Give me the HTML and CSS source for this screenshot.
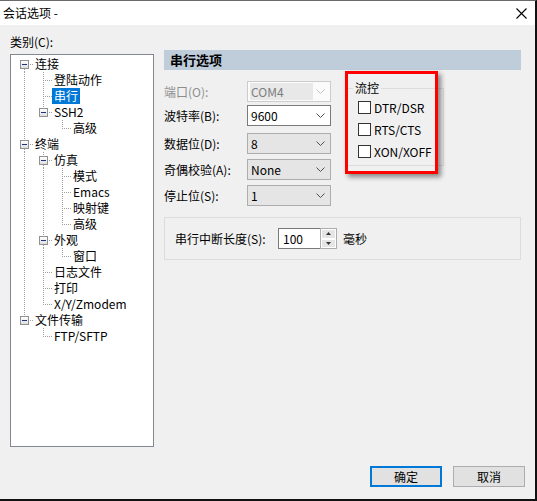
FILE: index.html
```html
<!DOCTYPE html>
<html lang="zh-CN">
<head>
<meta charset="utf-8">
<title>会话选项</title>
<link rel="stylesheet" href="styles.css">
</head>
<body>
<div class="window">
  <div class="titlebar">
    <span class="title">会话选项 -</span>
    <svg class="close" width="11" height="11" viewBox="0 0 11 11"><path d="M0.5 0.5 L10.5 10.5 M10.5 0.5 L0.5 10.5" stroke="#000" stroke-width="1.1" fill="none"/></svg>
  </div>
  <div class="main">
    <div class="cat">
      <div class="cat-label">类别(C):</div>
      <div class="tree">
        <div class="row"><span class="g bx bot"><i class="box"></i></span><span class="t">连接</span></div>
        <div class="row"><span class="g pipe"></span><span class="g tee"></span><span class="t">登陆动作</span></div>
        <div class="row"><span class="g pipe"></span><span class="g tee"></span><span class="t sel">串行</span></div>
        <div class="row"><span class="g pipe"></span><span class="g bx top"><i class="box"></i></span><span class="t">SSH2</span></div>
        <div class="row"><span class="g pipe"></span><span class="g"></span><span class="g elbow"></span><span class="t">高级</span></div>
        <div class="row"><span class="g bx mid"><i class="box"></i></span><span class="t">终端</span></div>
        <div class="row"><span class="g pipe"></span><span class="g bx mid"><i class="box"></i></span><span class="t">仿真</span></div>
        <div class="row"><span class="g pipe"></span><span class="g pipe"></span><span class="g tee"></span><span class="t">模式</span></div>
        <div class="row"><span class="g pipe"></span><span class="g pipe"></span><span class="g tee"></span><span class="t">Emacs</span></div>
        <div class="row"><span class="g pipe"></span><span class="g pipe"></span><span class="g tee"></span><span class="t">映射键</span></div>
        <div class="row"><span class="g pipe"></span><span class="g pipe"></span><span class="g elbow"></span><span class="t">高级</span></div>
        <div class="row"><span class="g pipe"></span><span class="g bx mid"><i class="box"></i></span><span class="t">外观</span></div>
        <div class="row"><span class="g pipe"></span><span class="g pipe"></span><span class="g elbow"></span><span class="t">窗口</span></div>
        <div class="row"><span class="g pipe"></span><span class="g tee"></span><span class="t">日志文件</span></div>
        <div class="row"><span class="g pipe"></span><span class="g tee"></span><span class="t">打印</span></div>
        <div class="row"><span class="g pipe"></span><span class="g elbow"></span><span class="t">X/Y/Zmodem</span></div>
        <div class="row"><span class="g bx top"><i class="box"></i></span><span class="t">文件传输</span></div>
        <div class="row"><span class="g"></span><span class="g elbow"></span><span class="t">FTP/SFTP</span></div>
      </div>
    </div>
    <div class="panel">
      <div class="head">串行选项</div>
      <div class="upper">
        <div class="fields">
          <div class="lbl disabled">端口(O):</div>
          <div class="combo dis"><span class="val">COM4</span><svg class="chev" width="9" height="5" viewBox="0 0 9 5"><path d="M0.5 0.5 L4.5 4.5 L8.5 0.5" stroke="#c4c4c4" fill="none"/></svg></div>
          <div class="lbl">波特率(B):</div>
          <div class="combo edit"><span class="val">9600</span><svg class="chev" width="9" height="5" viewBox="0 0 9 5"><path d="M0.5 0.5 L4.5 4.5 L8.5 0.5" stroke="#505050" fill="none"/></svg></div>
          <div class="lbl">数据位(D):</div>
          <div class="combo"><span class="val">8</span><svg class="chev" width="9" height="5" viewBox="0 0 9 5"><path d="M0.5 0.5 L4.5 4.5 L8.5 0.5" stroke="#505050" fill="none"/></svg></div>
          <div class="lbl">奇偶校验(A):</div>
          <div class="combo"><span class="val">None</span><svg class="chev" width="9" height="5" viewBox="0 0 9 5"><path d="M0.5 0.5 L4.5 4.5 L8.5 0.5" stroke="#505050" fill="none"/></svg></div>
          <div class="lbl">停止位(S):</div>
          <div class="combo"><span class="val">1</span><svg class="chev" width="9" height="5" viewBox="0 0 9 5"><path d="M0.5 0.5 L4.5 4.5 L8.5 0.5" stroke="#505050" fill="none"/></svg></div>
        </div>
        <div class="flow">
          <fieldset class="flowgrp">
            <legend>流控</legend>
            <div class="checks">
              <div class="chk"><span class="cb"></span><span>DTR/DSR</span></div>
              <div class="chk"><span class="cb"></span><span>RTS/CTS</span></div>
              <div class="chk"><span class="cb"></span><span>XON/XOFF</span></div>
            </div>
          </fieldset>
          <div class="mark"></div>
        </div>
      </div>
      <div class="brk">
        <span class="brk-lbl">串行中断长度(S):</span>
        <div class="spin">
          <span class="spin-val">100</span>
          <span class="spin-btns">
            <span class="sb"><svg width="5" height="3" viewBox="0 0 5 3"><path d="M2.5 0 L5 3 L0 3 Z" fill="#333"/></svg></span>
            <span class="sb"><svg width="5" height="3" viewBox="0 0 5 3"><path d="M0 0 L5 0 L2.5 3 Z" fill="#333"/></svg></span>
          </span>
        </div>
        <span class="unit">毫秒</span>
      </div>
    </div>
  </div>
  <div class="footer">
    <button class="btn primary">确定</button>
    <button class="btn">取消</button>
  </div>
</div>
</body>
</html>
```
FILE: styles.css
```css
html, body {
  margin: 0;
  padding: 0;
  background: #f0f0f0;
}
body {
  font-family: "Noto Sans CJK SC", "Noto Sans", sans-serif;
  font-size: 12px;
  line-height: 16px;
  color: #000;
}
.window {
  width: 537px;
  height: 501px;
  box-sizing: border-box;
  border-top: 1px solid #6a6a6a;
  border-right: 2px solid #111;
  border-bottom: 2px solid #111;
  background: #f0f0f0;
  display: flex;
  flex-direction: column;
}
.titlebar {
  height: 24px;
  flex-shrink: 0;
  background: #fff;
  display: flex;
  align-items: center;
  padding-left: 3px;
}
.title {
  line-height: 16px;
}
.close {
  margin-left: auto;
  margin-right: 8px;
  display: block;
}
.main {
  flex: 1;
  display: flex;
}
.cat {
  padding-left: 10px;
  padding-top: 9px;
}
.cat-label {
  line-height: 16px;
  margin-bottom: 4px;
}
.tree {
  width: 144px;
  height: 393px;
  box-sizing: border-box;
  border: 1px solid #828790;
  background: #fff;
  padding: 1px 0 0 4px;
}
.row {
  display: flex;
  height: 16px;
}
.g {
  width: 19px;
  height: 16px;
  flex-shrink: 0;
  display: flex;
  align-items: flex-start;
}
.pipe {
  background: repeating-linear-gradient(to bottom, #a0a0a0 0 1px, transparent 1px 2px) 9px 0 / 1px 16px no-repeat;
}
.tee {
  background:
    repeating-linear-gradient(to bottom, #a0a0a0 0 1px, transparent 1px 2px) 9px 0 / 1px 16px no-repeat,
    repeating-linear-gradient(to right, #a0a0a0 0 1px, transparent 1px 2px) 11px 8px / 8px 1px no-repeat;
}
.elbow {
  background:
    repeating-linear-gradient(to bottom, #a0a0a0 0 1px, transparent 1px 2px) 9px 0 / 1px 9px no-repeat,
    repeating-linear-gradient(to right, #a0a0a0 0 1px, transparent 1px 2px) 11px 8px / 8px 1px no-repeat;
}
.bx.bot {
  background:
    repeating-linear-gradient(to bottom, #a0a0a0 0 1px, transparent 1px 2px) 9px 13px / 1px 3px no-repeat,
    repeating-linear-gradient(to right, #a0a0a0 0 1px, transparent 1px 2px) 15px 8px / 4px 1px no-repeat;
}
.bx.top {
  background:
    repeating-linear-gradient(to bottom, #a0a0a0 0 1px, transparent 1px 2px) 9px 0 / 1px 4px no-repeat,
    repeating-linear-gradient(to right, #a0a0a0 0 1px, transparent 1px 2px) 15px 8px / 4px 1px no-repeat;
}
.bx.mid {
  background:
    repeating-linear-gradient(to bottom, #a0a0a0 0 1px, transparent 1px 2px) 9px 0 / 1px 4px no-repeat,
    repeating-linear-gradient(to bottom, #a0a0a0 0 1px, transparent 1px 2px) 9px 13px / 1px 3px no-repeat,
    repeating-linear-gradient(to right, #a0a0a0 0 1px, transparent 1px 2px) 15px 8px / 4px 1px no-repeat;
}
.box {
  width: 9px;
  height: 9px;
  box-sizing: border-box;
  margin: 4px 0 0 5px;
  border: 1px solid #919191;
  background:
    linear-gradient(#23307a, #23307a) 1px 3px / 5px 1px no-repeat,
    linear-gradient(#ffffff, #dedede);
}
.t {
  padding: 0 2px;
  margin-left: -1px;
  line-height: 16px;
  white-space: nowrap;
}
.t.sel {
  background: #0078d7;
  color: #fff;
}
.panel {
  margin-left: 10px;
  padding-top: 25px;
  width: 357px;
}
.head {
  height: 20px;
  line-height: 20px;
  background: #bfcddb;
  font-size: 13px;
  font-weight: bold;
  padding-left: 6px;
}
.upper {
  margin-top: 11px;
  display: flex;
  align-items: flex-start;
}
.fields {
  display: grid;
  grid-template-columns: 83px 84px;
  grid-template-rows: 24px 28px 26px 26px 21px;
  align-items: start;
}
.lbl {
  line-height: 21px;
  white-space: nowrap;
}
.lbl.disabled {
  color: #8d8d8d;
}
.combo {
  height: 21px;
  box-sizing: border-box;
  border: 1px solid #adadad;
  background: #e5e5e5;
  display: flex;
  align-items: center;
  justify-content: space-between;
  padding: 0 5px 0 3px;
}
.combo .val {
  line-height: 17px;
}
.combo.edit {
  background: #fff;
  border-color: #7a7a7a;
}
.combo.dis {
  background: #fbfbfb;
  border-color: #cccccc;
  padding-left: 2px;
}
.combo.dis .val {
  background: #e8e8e8;
  color: #7d7d7d;
  width: 62px;
  padding-left: 1px;
}
.chev {
  display: block;
}
.flow {
  position: relative;
  margin-left: 16px;
  margin-top: -1px;
}
.flowgrp {
  margin: 0;
  padding: 0;
  width: 97px;
  box-sizing: border-box;
  border: 1px solid #dcdcdc;
  min-width: 0;
}
.flowgrp legend {
  margin-left: 5px;
  padding: 0 2px;
  line-height: 16px;
}
.checks {
  display: flex;
  flex-direction: column;
  gap: 9px;
  padding: 5px 0 7px 10px;
}
.chk {
  display: flex;
  align-items: center;
  height: 13px;
  gap: 3px;
  line-height: 16px;
}
.cb {
  width: 13px;
  height: 13px;
  box-sizing: border-box;
  border: 1px solid #333;
  background: #fff;
  flex-shrink: 0;
}
.mark {
  position: absolute;
  left: -2px;
  top: -9px;
  width: 93px;
  height: 103px;
  box-sizing: border-box;
  border: 3px solid #ff0000;
  box-shadow: 3px 3px 5px rgba(0, 0, 0, 0.45);
}
.brk {
  margin-top: 11px;
  height: 43px;
  box-sizing: border-box;
  border: 1px solid #dcdcdc;
  display: flex;
  align-items: center;
  padding-left: 10px;
}
.brk-lbl {
  width: 103px;
  white-space: nowrap;
}
.spin {
  display: flex;
  height: 21px;
  width: 59px;
}
.spin-val {
  flex: 1;
  box-sizing: border-box;
  border: 1px solid #7a7a7a;
  border-right: 0;
  background: #fff;
  padding-left: 4px;
  line-height: 19px;
}
.spin-btns {
  width: 17px;
  display: flex;
  flex-direction: column;
  border: 1px solid #adadad;
  box-sizing: border-box;
  background: #fff;
}
.sb {
  flex: 1;
  background: #e5e5e5;
  border: 1px solid #fff;
  display: flex;
  align-items: center;
  justify-content: center;
}
.sb svg {
  display: block;
}
.unit {
  margin-left: 6px;
}
.footer {
  flex-shrink: 0;
  display: flex;
  justify-content: flex-end;
  gap: 11px;
  padding: 0 10px 12px 0;
}
.btn {
  width: 72px;
  height: 21px;
  box-sizing: border-box;
  border: 1px solid #adadad;
  background: #e1e1e1;
  font-family: "Noto Sans CJK SC", "Noto Sans", sans-serif;
  font-size: 12px;
  line-height: 16px;
  color: #000;
  padding: 0;
}
.btn.primary {
  border: 2px solid #0078d7;
}
```
